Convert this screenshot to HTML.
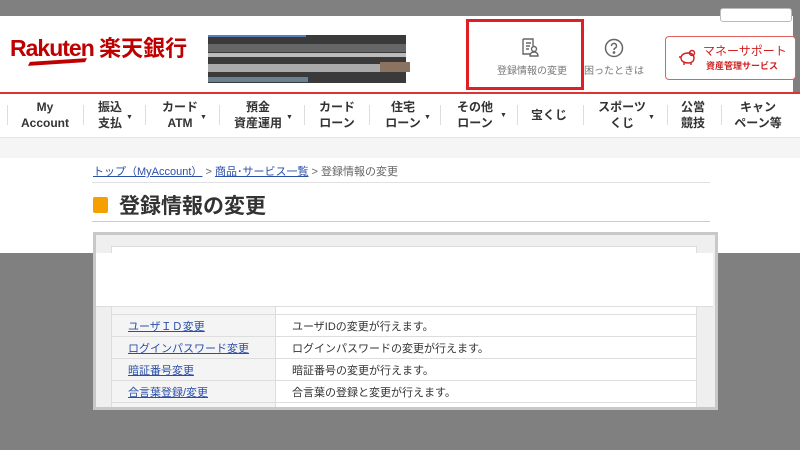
<!DOCTYPE html>
<html><head><meta charset="utf-8"><style>
*{margin:0;padding:0;box-sizing:border-box}
body{width:800px;height:450px;overflow:hidden;position:relative;background:#fff;font-family:"Liberation Sans","Noto Sans CJK JP",sans-serif;color:#333}
.a{position:absolute}
.nav div.i{position:absolute;top:99px;font-size:12px;font-weight:bold;line-height:16px;text-align:center;color:#333;transform:translateX(-50%);white-space:nowrap}
.sep{position:absolute;top:105px;width:1px;height:20px;background:#ddd}
.tri{font-size:7px;position:absolute}
table{border-collapse:collapse;position:absolute;left:15px;top:55px;width:586px;font-size:11px}
td{height:22px;border:1px solid #ddd;padding-left:16px}
td.l{width:164px;background:#f4f4f4}
td.l a{color:#2b4fa8;text-decoration:underline}
td.r{background:#fff;color:#333}
</style></head><body>
<div class="a" style="left:0;top:0;width:800px;height:16px;background:#808080"></div>
<div class="a" style="left:720px;top:8px;width:72px;height:14px;border:1px solid #bbb;border-radius:3px;background:#fff"></div>
<div class="a" style="left:793px;top:0;width:7px;height:92px;background:#808080"></div>
<!-- logo -->
<div class="a" style="left:10px;top:35px;font-size:23px;font-weight:bold;color:#bf0000;letter-spacing:-1px;line-height:26px">Rakuten <span style="font-size:22px;letter-spacing:0">楽天銀行</span></div>
<div class="a" style="left:30px;top:60px;width:55px;height:4px;background:#bf0000;transform:skewX(-30deg) rotate(-4deg)"></div>
<!-- redacted -->
<div class="a" style="left:208px;top:35px;width:198px;height:48px;background:#3a3a3a"></div>
<div class="a" style="left:208px;top:35px;width:98px;height:2px;background:#5a80b8"></div>
<div class="a" style="left:208px;top:44px;width:198px;height:8px;background:#666"></div>
<div class="a" style="left:208px;top:53px;width:198px;height:4px;background:#bbb"></div>
<div class="a" style="left:208px;top:64px;width:198px;height:8px;background:#aaa"></div>
<div class="a" style="left:380px;top:62px;width:30px;height:10px;background:#8a7360"></div>
<div class="a" style="left:208px;top:77px;width:100px;height:5px;background:#6a8090"></div>
<!-- highlighted -->
<div class="a" style="left:466px;top:19px;width:118px;height:71px;border:3px solid #e01e25"></div>
<svg class="a" style="left:520px;top:37px" width="20" height="20" viewBox="0 0 20 20" fill="none" stroke="#666" stroke-width="1.4"><path d="M3 2h10v7M3 2v15h7M6 6h5M6 9h4M6 12h3"/><circle cx="14" cy="12" r="2.5"/><path d="M10 19c0-3 2-4 4-4s4 1 4 4z"/></svg>
<div class="a" style="left:497px;top:62px;font-size:10px;color:#777">登録情報の変更</div>
<svg class="a" style="left:604px;top:38px" width="20" height="20" viewBox="0 0 20 20" fill="none" stroke="#666" stroke-width="1.5"><circle cx="10" cy="10" r="8.5"/><path d="M7.5 8a2.5 2.5 0 1 1 3.5 2.2c-.8.4-1 1-1 1.8"/><circle cx="10" cy="14.5" r=".6" fill="#666"/></svg>
<div class="a" style="left:584px;top:62px;font-size:10px;color:#777">困ったときは</div>
<div class="a" style="left:665px;top:36px;width:131px;height:44px;border:1px solid #e06060;border-radius:4px;background:#fff"></div>
<svg class="a" style="left:678px;top:48px" width="20" height="20" viewBox="0 0 20 20" fill="none" stroke="#d02020" stroke-width="1.4"><path d="M3 10c0-3 3-5 7-5s6 2 6 5-2 5-6 5-7-2-7-5zM1 9h2M6 14v3M13 14v3"/><circle cx="14" cy="5" r="2.5"/></svg>
<div class="a" style="left:703px;top:42px;font-size:12px;color:#d02020">マネーサポート</div>
<div class="a" style="left:706px;top:59px;font-size:9px;color:#d02020;font-weight:bold">資産管理サービス</div>
<!-- nav -->
<div class="a" style="left:0;top:92px;width:800px;height:2px;background:#d33"></div>
<div class="a" style="left:0;top:137px;width:800px;height:21px;background:#f5f5f5;border-top:1px solid #e4e4e4"></div>
<div class="nav">
<div class="sep" style="left:7px"></div><div class="sep" style="left:83px"></div><div class="sep" style="left:145px"></div><div class="sep" style="left:219px"></div><div class="sep" style="left:304px"></div><div class="sep" style="left:369px"></div><div class="sep" style="left:440px"></div><div class="sep" style="left:517px"></div><div class="sep" style="left:583px"></div><div class="sep" style="left:667px"></div><div class="sep" style="left:721px"></div>
<div class="i" style="left:45px">My<br>Account</div>
<div class="i" style="left:110px">振込<br>支払</div><span class="tri a" style="left:126px;top:114px">▼</span>
<div class="i" style="left:180px">カード<br>ATM</div><span class="tri a" style="left:200px;top:114px">▼</span>
<div class="i" style="left:258px">預金<br>資産運用</div><span class="tri a" style="left:286px;top:114px">▼</span>
<div class="i" style="left:337px">カード<br>ローン</div>
<div class="i" style="left:403px">住宅<br>ローン</div><span class="tri a" style="left:424px;top:114px">▼</span>
<div class="i" style="left:475px">その他<br>ローン</div><span class="tri a" style="left:500px;top:112px">▼</span>
<div class="i" style="left:549px;top:107px">宝くじ</div>
<div class="i" style="left:622px">スポーツ<br>くじ</div><span class="tri a" style="left:648px;top:114px">▼</span>
<div class="i" style="left:693px">公営<br>競技</div>
<div class="i" style="left:758px">キャン<br>ペーン等</div>
</div>
<!-- content -->
<div class="a" style="left:93px;top:163px;font-size:11px;color:#666;white-space:nowrap"><span style="color:#2b4fa8;text-decoration:underline">トップ（MyAccount）</span> &gt; <span style="color:#2b4fa8;text-decoration:underline">商品･サービス一覧</span> &gt; 登録情報の変更</div>
<div class="a" style="left:92px;top:182px;width:618px;height:1px;background:#e0e0e0"></div>
<div class="a" style="left:93px;top:197px;width:15px;height:16px;background:#f5a000;border-radius:2px"></div>
<div class="a" style="left:119px;top:194px;font-size:21px;font-weight:bold;color:#333;line-height:26px">登録情報の変更</div>
<div class="a" style="left:92px;top:221px;width:618px;height:1px;background:#ccc"></div>
<!-- dim -->
<div class="a" style="left:0;top:253px;width:800px;height:197px;background:#808080"></div>
<div class="a" style="left:93px;top:232px;width:625px;height:178px;background:#efefef;border:3px solid #c8c8c8;overflow:hidden">
<table>
<tr><td class="l" style="height:24px"></td><td class="r"></td></tr>
<tr><td class="l"><a>ユーザＩＤ変更</a></td><td class="r">ユーザIDの変更が行えます。</td></tr>
<tr><td class="l"><a>ログインパスワード変更</a></td><td class="r">ログインパスワードの変更が行えます。</td></tr>
<tr><td class="l"><a>暗証番号変更</a></td><td class="r">暗証番号の変更が行えます。</td></tr>
<tr><td class="l"><a>合言葉登録/変更</a></td><td class="r">合言葉の登録と変更が行えます。</td></tr>
<tr><td class="l"></td><td class="r"></td></tr>
</table>
</div>
<div class="a" style="left:111px;top:246px;width:586px;height:10px;background:#fff;border:1px solid #ddd"></div>
<div class="a" style="left:96px;top:253px;width:617px;height:54px;background:#fff;border-bottom:1px solid #ddd"></div>
</body></html>
